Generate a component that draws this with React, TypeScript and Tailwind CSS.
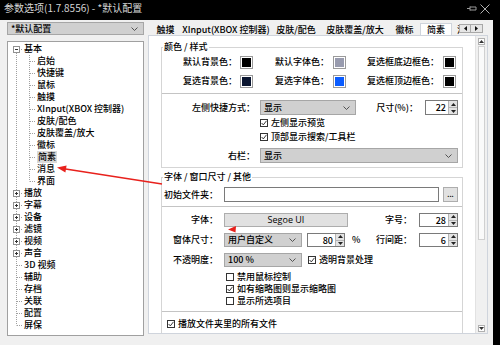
import React from "react";

type TreeRow = {
  text: string;
  child?: boolean;
  box?: "-" | "+";
  first?: boolean;
  last?: boolean;
  selected?: boolean;
};

const tree: TreeRow[] = [
  { text: "基本", box: "-", first: true },
  { text: "启始", child: true },
  { text: "快捷键", child: true },
  { text: "鼠标", child: true },
  { text: "触摸", child: true },
  { text: "XInput(XBOX 控制器)", child: true },
  { text: "皮肤/配色", child: true },
  { text: "皮肤覆盖/放大", child: true },
  { text: "徽标", child: true },
  { text: "简素", child: true, selected: true },
  { text: "消息", child: true },
  { text: "界面", child: true, last: true },
  { text: "播放", box: "+" },
  { text: "字幕", box: "+" },
  { text: "设备", box: "+" },
  { text: "滤镜", box: "+" },
  { text: "视频", box: "+" },
  { text: "声音", box: "+" },
  { text: "3D 视频" },
  { text: "辅助" },
  { text: "存档" },
  { text: "关联" },
  { text: "配置" },
  { text: "屏保", last: true },
];

const dots = { stroke: "#a0a0a0", strokeDasharray: "1 1", strokeWidth: 1 };

function RootCell({ row }: { row: TreeRow }) {
  let y1 = 0;
  let y2 = 12;
  if (!row.child) {
    if (row.first) y1 = 6;
    if (row.last) y2 = 6.5;
  }
  return (
    <svg width="13" height="12" className="shrink-0">
      <line x1="6.5" y1={y1} x2="6.5" y2={y2} {...dots} />
      {!row.child && <line x1="7" y1="6.5" x2="13" y2="6.5" {...dots} />}
      {row.box && (
        <g>
          <rect x="3.5" y="3.5" width="6" height="6" fill="white" stroke="#919191" />
          <line x1="5" y1="6.5" x2="8" y2="6.5" stroke="#333" />
          {row.box === "+" && <line x1="6.5" y1="5" x2="6.5" y2="8" stroke="#333" />}
        </g>
      )}
    </svg>
  );
}

function ChildCell({ last }: { last?: boolean }) {
  return (
    <svg width="13" height="12" className="shrink-0">
      <line x1="6.5" y1="0" x2="6.5" y2={last ? 6.5 : 12} {...dots} />
      <line x1="7" y1="6.5" x2="13" y2="6.5" {...dots} />
    </svg>
  );
}

function Chevron() {
  return (
    <svg width="7" height="4" viewBox="0 0 7 4" className="shrink-0">
      <path d="M0.5 0.5 L3.5 3.5 L6.5 0.5" fill="none" stroke="#444" strokeWidth="0.9" />
    </svg>
  );
}

function Select({ text, className }: { text: string; className: string }) {
  return (
    <div
      className={`flex items-center justify-between border border-[#a6a6a6] bg-[#d0d0d0] pl-[3px] pr-[5px] ${className}`}
    >
      <span>{text}</span>
      <Chevron />
    </div>
  );
}

function Spin({ value, className }: { value: string; className: string }) {
  return (
    <div className={`flex h-[15px] border border-[#7a7a7a] bg-white ${className}`}>
      <div className="flex-1 pr-[2px] text-right leading-[13px]">{value}</div>
      <div className="flex w-[9px] flex-col border-l border-[#b5b5b5]">
        <div className="flex flex-1 items-center justify-center border-b border-[#b5b5b5] bg-[#e3e3e3]">
          <svg width="5" height="3">
            <path d="M0 3 L2.5 0 L5 3 Z" fill="#222" />
          </svg>
        </div>
        <div className="flex flex-1 items-center justify-center bg-[#e3e3e3]">
          <svg width="5" height="3">
            <path d="M0 0 L2.5 3 L5 0 Z" fill="#222" />
          </svg>
        </div>
      </div>
    </div>
  );
}

function Check({ checked, label, className }: { checked?: boolean; label: string; className?: string }) {
  return (
    <div className={`flex h-[12px] items-center ${className ?? ""}`}>
      <div className="flex h-[8px] w-[8px] shrink-0 items-center justify-center border border-[#333] bg-white">
        {checked && (
          <svg width="6" height="6" viewBox="0 0 6 6">
            <path d="M0.6 3 L2.3 4.9 L5.5 0.8" fill="none" stroke="#222" strokeWidth="0.9" />
          </svg>
        )}
      </div>
      <span className="ml-[3px] whitespace-nowrap">{label}</span>
    </div>
  );
}

function Swatch({ color }: { color: string }) {
  return (
    <div className="h-[13px] w-[13px] shrink-0 border border-[#9a9a9a] bg-white p-[1px]">
      <div className="h-full w-full" style={{ background: color }} />
    </div>
  );
}

function Sep({ className }: { className: string }) {
  return <div className={`h-[2px] border-t border-b border-t-[#c4c4c4] border-b-white ${className}`} />;
}

const tabs = [
  { t: "触摸", w: "w-[31px]" },
  { t: "XInput(XBOX 控制器)", w: "w-[90px]" },
  { t: "皮肤/配色", w: "w-[50px]" },
  { t: "皮肤覆盖/放大", w: "w-[68px]" },
  { t: "徽标", w: "w-[31px]" },
];

export default function App() {
  return (
    <div className="relative flex h-[345px] w-[500px] overflow-hidden bg-[#f0f0f0] font-['Noto_Sans_CJK_SC','Noto_Sans',sans-serif] text-[9px] font-medium leading-[12px] text-black">
      <div className="flex w-[493px] flex-col">
        {/* title bar */}
        <div className="flex h-[20px] shrink-0 items-start bg-black pl-[4px] pr-[3px] pt-[2px]">
          <span className="text-[10px] font-normal leading-[12px] text-[#d6d6d6]">参数选项(1.7.8556) - *默认配置</span>
          <svg width="26" height="14" className="ml-auto">
            <path d="M3 6.5 H6 M6 4.5 V8.5 M6 5 H12 V8 H6" fill="none" stroke="#9a9a9a" strokeWidth="1" />
            <path d="M16.5 2.5 L25.5 11.5 M25.5 2.5 L16.5 11.5" stroke="#b0b0b0" strokeWidth="1" />
          </svg>
        </div>

        <div className="flex flex-1 pl-[7px]">
          {/* left column */}
          <div className="flex w-[137px] flex-col">
            <Select text="*默认配置" className="mt-[2px] h-[13px] leading-[11px]" />
            <div className="mt-[6px] h-[295px] border border-[#a0a0a0] bg-white pl-[2px] pt-[1px]">
              {tree.map((row) => (
                <div key={row.text} className="flex h-[12px] items-center">
                  <RootCell row={row} />
                  {row.child && <ChildCell last={row.last} />}
                  <span
                    className={`ml-[1px] whitespace-nowrap leading-[12px] ${row.selected ? "bg-[#d9d9d9] px-[1px]" : ""}`}
                  >
                    {row.text}
                  </span>
                </div>
              ))}
            </div>
          </div>

          {/* right column */}
          <div className="ml-[4px] flex w-[340px] flex-col">
            <div className="flex h-[15px] items-end">
              <div className="flex w-[311px] items-end overflow-hidden pl-[2px]">
                {tabs.map((tab) => (
                  <div key={tab.t} className={`flex h-[11px] shrink-0 items-center justify-center whitespace-nowrap ${tab.w}`}>
                    {tab.t}
                  </div>
                ))}
                <div className="relative z-10 mb-[-1px] flex h-[13px] w-[32px] shrink-0 items-center justify-center border border-b-0 border-[#cfd4dc] bg-white pb-[1px]">
                  简素
                </div>
                <div className="flex h-[11px] shrink-0 items-center pl-[5px]">消息</div>
              </div>
              <div className="mb-[2px] flex h-[9px]">
                <div className="flex w-[12px] items-center justify-center border border-[#a8a8a8] bg-[#e6e6e6]">
                  <svg width="3" height="5">
                    <path d="M3 0 L0 2.5 L3 5 Z" fill="#111" />
                  </svg>
                </div>
                <div className="flex w-[12px] items-center justify-center border border-l-0 border-[#a8a8a8] bg-[#e6e6e6]">
                  <svg width="3" height="5">
                    <path d="M0 0 L3 2.5 L0 5 Z" fill="#111" />
                  </svg>
                </div>
              </div>
            </div>

            <div className="flex h-[299px] border border-[#cfd4dc] bg-white">
              <div className="w-[326px] overflow-hidden pt-[5px]">
                <fieldset className="mx-[12px] border border-[#d5d5d5] pb-[4px]">
                  <legend className="ml-[1px] px-[1px] leading-[12px]">颜色 / 样式</legend>
                  <div className="mt-[2px] flex h-[14px] items-center">
                    <div className="w-[78px] pr-[3px] text-right">默认背景色：</div>
                    <Swatch color="#000000" />
                    <div className="w-[80px] pr-[4px] text-right">默认字体色：</div>
                    <Swatch color="#989bae" />
                    <div className="w-[97px] pr-[4px] text-right">复选框底边框色：</div>
                    <Swatch color="#000000" />
                  </div>
                  <div className="mt-[5px] flex h-[14px] items-center">
                    <div className="w-[78px] pr-[3px] text-right">复选背景色：</div>
                    <Swatch color="#0a1530" />
                    <div className="w-[80px] pr-[4px] text-right">复选字体色：</div>
                    <Swatch color="#0a5cff" />
                    <div className="w-[97px] pr-[4px] text-right">复选框顶边框色：</div>
                    <Swatch color="#000000" />
                  </div>
                  <Sep className="mt-[5px]" />
                  <div className="mt-[5px] flex h-[15px] items-center">
                    <div className="w-[96px] pr-[3px] text-right">左侧快捷方式：</div>
                    <Select text="显示" className="ml-[2px] h-[15px] w-[96px]" />
                    <div className="w-[66px] pr-[4px] text-right">尺寸(%)：</div>
                    <Spin value="22" className="ml-[3px] w-[33px]" />
                  </div>
                  <Check checked label="左侧显示预览" className="ml-[98px] mt-[2px]" />
                  <Check checked label="顶部显示搜索/工具栏" className="ml-[98px] mt-[2px]" />
                  <div className="mt-[5px] flex h-[15px] items-center">
                    <div className="w-[96px] pr-[3px] text-right">右栏：</div>
                    <Select text="显示" className="ml-[2px] h-[15px] w-[198px]" />
                  </div>
                </fieldset>

                <fieldset className="mx-[12px] mt-[3px] border border-[#d5d5d5] pb-[10px]">
                  <legend className="ml-[1px] px-[1px] leading-[12px]">字体 / 窗口尺寸 / 其他</legend>
                  <div className="mt-[4px] flex h-[15px] items-center">
                    <div className="w-[60px] pr-[4px] text-right">初始文件夹：</div>
                    <div className="ml-[2px] h-[15px] w-[215px] border border-[#7a7a7a] bg-white" />
                    <div className="ml-[4px] flex h-[15px] w-[15px] items-center justify-center border border-[#adadad] bg-[#e1e1e1] text-[7px] leading-[7px]">
                      ...
                    </div>
                  </div>
                  <Sep className="mt-[4px]" />
                  <div className="mt-[5px] flex h-[14px] items-center">
                    <div className="w-[60px] pr-[4px] text-right">字体：</div>
                    <div className="ml-[2px] flex h-[14px] w-[124px] items-center justify-center border border-[#adadad] bg-[#e1e1e1] font-['Open_Sans',sans-serif]">
                      Segoe UI
                    </div>
                    <div className="w-[67px] pr-[3px] text-right">字号：</div>
                    <Spin value="28" className="ml-[4px] !h-[14px] w-[39px]" />
                  </div>
                  <div className="mt-[6px] flex h-[14px] items-center">
                    <div className="w-[60px] pr-[4px] text-right">窗体尺寸：</div>
                    <Select text="用户自定义" className="ml-[2px] h-[14px] w-[78px]" />
                    <Spin value="80" className="ml-[5px] !h-[14px] w-[38px]" />
                    <span className="ml-[7px] w-[8px]">%</span>
                    <div className="w-[55px] pr-[3px] text-right">行间距：</div>
                    <Spin value="6" className="ml-[4px] !h-[14px] w-[39px]" />
                  </div>
                  <div className="mt-[6px] flex h-[14px] items-center">
                    <div className="w-[60px] pr-[4px] text-right">不透明度：</div>
                    <Select text="100 %" className="ml-[2px] h-[14px] w-[78px]" />
                    <Check checked label="透明背景处理" className="ml-[6px]" />
                  </div>
                  <Check label="禁用鼠标控制" className="ml-[64px] mt-[4px]" />
                  <Check checked label="如有缩略图则显示缩略图" className="ml-[64px]" />
                  <Check label="显示所选项目" className="ml-[64px]" />
                  <Sep className="mt-[4px]" />
                  <Check checked label="播放文件夹里的所有文件" className="ml-[5px] mt-[5px]" />
                </fieldset>
              </div>

              {/* scrollbar */}
              <div className="flex w-[12px] flex-col border-l border-[#e2e2e2] bg-[#f0f0f0]">
                <div className="flex h-[10px] items-center justify-center">
                  <div className="flex h-[7px] w-[7px] items-center justify-center border border-[#b0b0b0] bg-white">
                    <svg width="5" height="3">
                      <path d="M0 3 L2.5 0 L5 3 Z" fill="#333" />
                    </svg>
                  </div>
                </div>
                <div className="mx-[2px] h-[194px] border border-[#d0d0d0] bg-[#fafafa]" />
                <div className="flex-1" />
                <div className="flex h-[10px] items-center justify-center">
                  <div className="flex h-[7px] w-[7px] items-center justify-center border border-[#b0b0b0] bg-white">
                    <svg width="5" height="3">
                      <path d="M0 0 L2.5 3 L5 0 Z" fill="#333" />
                    </svg>
                  </div>
                </div>
              </div>
            </div>
          </div>
        </div>
      </div>
      <div className="w-[7px] bg-black" />

      {/* red annotation arrows */}
      <svg width="500" height="345" className="pointer-events-none absolute left-0 top-0">
        <line x1="64" y1="168.8" x2="162" y2="184" stroke="#e8211c" strokeWidth="1.4" />
        <path d="M57 167.6 L66.6 165.4 L65.4 172.4 Z" fill="#e8211c" />
        <path d="M228 229.5 L236 226 L235.5 232.5 Z" fill="#e8211c" />
      </svg>
    </div>
  );
}
